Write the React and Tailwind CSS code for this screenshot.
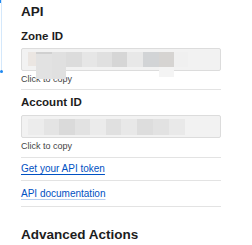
import React from "react";

const FONT = { fontFamily: "'Liberation Sans', Arial, sans-serif" };

function Blur({ blocks }) {
  return (
    <>
      {blocks.map(([x, y, w, h, c], i) => (
        <div
          key={i}
          className="absolute"
          style={{ left: x, top: y, width: w, height: h, background: c }}
        />
      ))}
    </>
  );
}

function CopyField({ label, labelClass, blocks }) {
  return (
    <div>
      <div className={`${labelClass} text-[11.5px] font-bold leading-[14px] text-[#1d1d1d]`}>{label}</div>
      <div className="relative h-[23px] w-[200px] rounded-[2px] border border-[#dcdcdc] bg-[#f2f2f2]">
        <Blur blocks={blocks} />
      </div>
      <div className="mt-[3px] text-[9px] leading-[11px] text-[#444]">Click to copy</div>
    </div>
  );
}

const zoneBlocks = [
  [6, 3, 8, 14, "#ebe6e2"],
  [14, 3, 16, 27, "#e2e2e2"],
  [14, 3, 16, 2, "#d0d0d0"],
  [30, 3, 14, 27, "#e0e0e0"],
  [44, 3, 16, 15, "#dcdcdc"],
  [60, 3, 15, 15, "#e6e6e6"],
  [75, 3, 15, 15, "#e0e0e0"],
  [90, 3, 15, 15, "#d6d6d6"],
  [105, 3, 16, 15, "#e8e8e8"],
  [121, 3, 16, 15, "#d2d4d6"],
  [137, 3, 15, 15, "#d6d4d2"],
  [152, 3, 14, 15, "#f0f0f0"],
  [137, 18, 15, 10, "#f4f4f4"],
];

const accountBlocks = [
  [6, 3, 16, 16, "#ececec"],
  [22, 3, 15, 16, "#e4e4e4"],
  [37, 3, 16, 16, "#dadada"],
  [53, 3, 15, 16, "#e2e2e2"],
  [68, 3, 16, 16, "#ebebeb"],
  [84, 3, 15, 16, "#e0e0e0"],
  [99, 3, 16, 16, "#e8e8e8"],
  [115, 3, 16, 16, "#dddddd"],
  [131, 3, 16, 16, "#e2e2e2"],
  [147, 3, 16, 16, "#e9e9e9"],
];

export default function App() {
  return (
    <div className="relative h-[245px] w-[252px] overflow-hidden bg-white" style={FONT}>
      <div className="absolute left-0 top-0 h-[3px] w-[2px] bg-[#1e88f0]" />
      <div className="absolute left-[1px] top-0 h-[72px] w-[1px] bg-[#d4e8fb]" />
      <div className="absolute left-0 top-[70px] h-[3px] w-[3px] rounded-full bg-[#1e88f0]" />

      <div className="pl-[21px] pt-[4px] text-[#1d1d1d]">
        <h2 className="h-[25px] text-[13.5px] font-bold leading-[16px]">API</h2>

        <CopyField label="Zone ID" labelClass="h-[19px]" blocks={zoneBlocks} />
        <div className="mt-[4px] h-px w-[200px] bg-[#e3e3e3]" />

        <div className="mt-[5px]">
          <CopyField label="Account ID" labelClass="h-[20px]" blocks={accountBlocks} />
        </div>
        <div className="mt-[5px] h-px w-[200px] bg-[#e3e3e3]" />

        <div className="flex h-[22px] items-center">
          <a className="text-[10px] leading-[12px] text-[#0051c3] underline decoration-[#0051c3] underline-offset-[2px]">
            Get your API token
          </a>
        </div>
        <div className="h-px w-[200px] bg-[#e3e3e3]" />

        <div className="flex h-[25px] items-center">
          <a className="text-[10px] leading-[12px] text-[#0051c3] underline decoration-[#b8d0f0] underline-offset-[2px]">
            API documentation
          </a>
        </div>
        <div className="h-px w-[200px] bg-[#e3e3e3]" />

        <h2 className="mt-[20px] text-[13.5px] font-bold leading-[16px]">Advanced Actions</h2>
      </div>
    </div>
  );
}
